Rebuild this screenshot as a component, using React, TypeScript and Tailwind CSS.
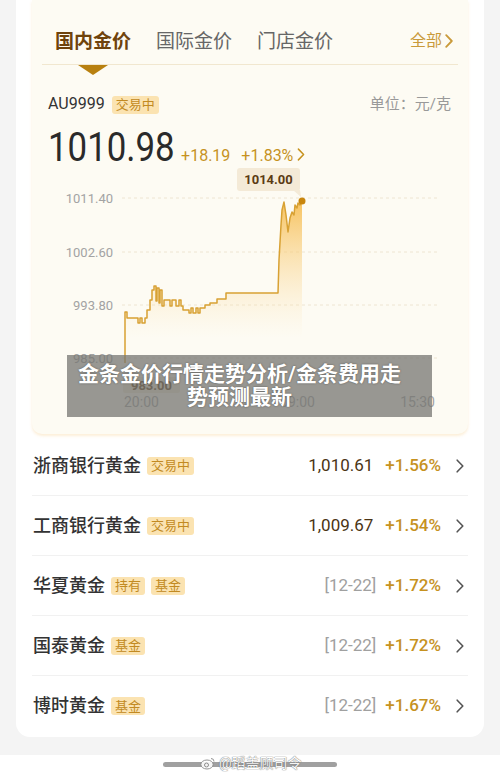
import React from "react";

const FONT = 'Roboto, "Noto Sans CJK SC", sans-serif';

function Chevron({ className = "" }: { className?: string }) {
  return (
    <svg width="8" height="14" viewBox="0 0 8 14" className={className}>
      <polyline points="1.2,1.2 6.8,7 1.2,12.8" fill="none" stroke="#555" strokeWidth="1.6" strokeLinecap="round" strokeLinejoin="round" />
    </svg>
  );
}

function Badge({ children }: { children: React.ReactNode }) {
  return (
    <span className="inline-flex items-center h-[18px] px-[4px] rounded-[3px] bg-[#fbe3b1] text-[#c28a22] text-[13px] leading-none">
      {children}
    </span>
  );
}

const linePts =
  "125,363 125,312 127,312 127,318 138,318 138,323 140,323 140,318 142,318 142,323 145,323 145,318 147,318 147,310 150,310 150,300 152,300 152,290 154,290 154,286 156,286 156,301 157,301 157,288 159,288 159,303 160,303 160,290 162,290 162,306 164,306 164,300 170,300 170,306 172,306 172,300 176,300 176,306 179,306 179,300 181,300 181,306 183,306 183,310 189,310 189,313 191,313 191,308 193,308 193,313 196,313 196,308 198,308 198,313 200,313 200,308 205,308 205,305 210,305 210,303 217,303 217,299 226,299 226,293 278,293 279,260 281,225 282,210 284,202 286,215 288,232 290,218 292,212 294,215 295,205 297,208 298,203 300,205 302,201";

function Chart() {
  const grid = [
    { y: 198, l: "1011.40" },
    { y: 252, l: "1002.60" },
    { y: 305, l: "993.80" },
    { y: 358, l: "985.00" },
  ];
  return (
    <svg width="435" height="253" viewBox="32 167 435 253" className="block" style={{ fontFamily: FONT }}>
      <defs>
        <linearGradient id="gfill" x1="0" y1="200" x2="0" y2="338" gradientUnits="userSpaceOnUse">
          <stop offset="0" stopColor="#f6bb4c" stopOpacity="0.9" />
          <stop offset="1" stopColor="#fbe6bb" stopOpacity="0" />
        </linearGradient>
      </defs>
      {grid.map((g) => (
        <g key={g.l}>
          <line x1="122" x2="437" y1={g.y} y2={g.y} stroke="#eee5d2" strokeWidth="1" strokeDasharray="3 3" />
          <text x="113" y={g.y + 4.5} textAnchor="end" fontSize="13" fill="#a3a3a3">{g.l}</text>
        </g>
      ))}
      <polygon points={`${linePts} 302,420 125,420`} fill="url(#gfill)" />
      <polyline points={linePts} fill="none" stroke="#d8a133" strokeWidth="1.5" strokeLinejoin="round" />
      <circle cx="302" cy="201" r="3.5" fill="#c8860e" />
      <rect x="237" y="168" width="63" height="23" rx="3" fill="#f4ead7" />
      <polygon points="293,190 300,190 301,197" fill="#f4ead7" />
      <text x="268.5" y="184" textAnchor="middle" fontSize="13" fontWeight="700" fill="#5b3b13">1014.00</text>
      <rect x="123" y="377" width="57" height="16" rx="2" fill="#f4ead7" />
      <text x="151.5" y="389.5" textAnchor="middle" fontSize="13" fontWeight="700" fill="#5b3b13">983.00</text>
      <text x="124" y="407" fontSize="14" fill="#a3a3a3">20:00</text>
      <text x="315" y="407" textAnchor="end" fontSize="14" fill="#a3a3a3">09:00</text>
      <text x="435" y="407" textAnchor="end" fontSize="14" fill="#a3a3a3">15:30</text>
    </svg>
  );
}

type Row = {
  name: string;
  badges: string[];
  value?: string;
  date?: string;
  pct: string;
};

const rows: Row[] = [
  { name: "浙商银行黄金", badges: ["交易中"], value: "1,010.61", pct: "+1.56%" },
  { name: "工商银行黄金", badges: ["交易中"], value: "1,009.67", pct: "+1.54%" },
  { name: "华夏黄金", badges: ["持有", "基金"], date: "[12-22]", pct: "+1.72%" },
  { name: "国泰黄金", badges: ["基金"], date: "[12-22]", pct: "+1.72%" },
  { name: "博时黄金", badges: ["基金"], date: "[12-22]", pct: "+1.67%" },
];

export default function App() {
  return (
    <div className="relative w-[500px] h-[774px] bg-[#f4f4f4] flex flex-col overflow-hidden" style={{ fontFamily: FONT }}>
      <div className="mx-[16px] bg-white rounded-b-[14px] px-[16px] pb-[1px]">
        {/* Gold panel */}
        <div className="bg-[#fdfbf3] rounded-b-[10px] pb-[14px] shadow-[0_2px_3px_rgba(245,205,140,0.35)]">
          <div className="flex items-center h-[64px] pt-[18px] pl-[23px] pr-[15px]">
            <span className="text-[19px] font-bold text-[#6f430c] leading-none">国内金价</span>
            <span className="ml-[25px] text-[19px] text-[#666] leading-none">国际金价</span>
            <span className="ml-[25px] text-[19px] text-[#666] leading-none">门店金价</span>
            <span className="ml-auto flex items-center gap-[3px] text-[16px] text-[#c99a3a] leading-none">
              全部
              <svg width="8" height="14" viewBox="0 0 8 14">
                <polyline points="1.2,1.2 6.8,7 1.2,12.8" fill="none" stroke="#c99a3a" strokeWidth="1.8" strokeLinecap="round" strokeLinejoin="round" />
              </svg>
            </span>
          </div>
          <div className="mx-[10px] h-px bg-[#f1e7cf]" />
          <div className="ml-[46px] w-0 h-0 border-l-[15px] border-r-[15px] border-t-[10px] border-l-transparent border-r-transparent border-t-[#b8800f]" />
          <div className="mt-[19px] h-[20px] flex items-center pl-[16px] pr-[17px]">
            <span className="text-[16px] text-[#333]">AU9999</span>
            <span className="ml-[7px]"><Badge>交易中</Badge></span>
            <span className="ml-auto text-[15px] text-[#999]">单位：元/克</span>
          </div>
          <div className="mt-[13px] h-[40px] flex items-baseline pl-[16px]">
            <span className="inline-block origin-left scale-x-[0.85] -mr-[22px] text-[41px] leading-[40px] text-[#2a2a2a]">1010.98</span>
            <span className="ml-[6px] text-[16px] text-[#c6921f]">+18.19</span>
            <span className="ml-[11px] text-[16px] text-[#c6921f]">+1.83%</span>
            <svg width="8" height="13" viewBox="0 0 8 14" className="ml-[4px]">
              <polyline points="1.2,1.2 6.8,7 1.2,12.8" fill="none" stroke="#c6921f" strokeWidth="1.6" strokeLinecap="round" strokeLinejoin="round" />
            </svg>
          </div>
          <Chart />
        </div>

        {/* List */}
        <div className="mt-[2px]">
          {rows.map((r, i) => (
            <div
              key={r.name}
              className={`flex items-center h-[60px] pl-[1px] pr-[4px] ${i < rows.length - 1 ? "border-b border-[#f1f1f1]" : ""}`}
            >
              <span className="text-[18px] font-medium text-[#333] leading-none">{r.name}</span>
              <div className="ml-[6px] flex items-center gap-[6px]">
                {r.badges.map((b) => (
                  <Badge key={b}>{b}</Badge>
                ))}
              </div>
              <div className="ml-auto flex items-center">
                {r.value ? (
                  <span className="text-[17px] text-[#4b3414]">{r.value}</span>
                ) : (
                  <span className="text-[17px] text-[#a0a0a0]">{r.date}</span>
                )}
                <span className={`${r.value ? "ml-[12px]" : "ml-[9px]"} text-[17px] font-medium text-[#c6921f]`}>{r.pct}</span>
                <Chevron className="ml-[15px]" />
              </div>
            </div>
          ))}
        </div>
      </div>

      <div className="h-[18px]" />
      <div className="flex-1 bg-white relative">
        <div className="mt-[7px] mx-auto w-[174px] h-[5px] rounded-full bg-[#a0a0a0]" />
        <div className="absolute left-[200px] top-[1px] flex items-center gap-[3px] opacity-90">
          <svg width="16" height="14" viewBox="0 0 16 14">
            <ellipse cx="7" cy="8.5" rx="6.2" ry="4.5" fill="#fff" stroke="#8a8a8a" strokeWidth="1" />
            <circle cx="6.5" cy="9" r="2" fill="none" stroke="#8a8a8a" strokeWidth="1" />
            <path d="M11 2.5 A3 3 0 0 1 14 5.5" fill="none" stroke="#8a8a8a" strokeWidth="1" />
          </svg>
          <span className="text-[14px] leading-none text-white" style={{ textShadow: "0 0 1px #666, 0 0 1px #666" }}>@蹈盖顾司令</span>
        </div>
      </div>

      {/* Overlay caption */}
      <div className="absolute left-[67px] top-[355px] w-[365px] h-[62px] bg-[rgba(118,117,114,0.75)] flex flex-col items-center justify-center pr-[20px]">
        <div className="text-[21px] leading-[23px] font-bold text-white text-center" style={{ textShadow: "0 0 2px rgba(0,0,0,0.45)" }}>
          金条金价行情走势分析/金条费用走
          <br />
          势预测最新
        </div>
      </div>
    </div>
  );
}
